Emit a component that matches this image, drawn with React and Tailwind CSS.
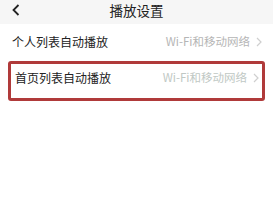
import React from "react";

const Chevron = () => (
  <svg width="6" height="10" viewBox="0 0 6 10" className="ml-[6px]">
    <path d="M1 1 L5 5 L1 9" fill="none" stroke="#cfcfcf" strokeWidth="1.2" />
  </svg>
);

export default function App() {
  return (
    <div
      className="w-[273px] h-[217px] bg-white overflow-hidden"
      style={{ fontFamily: '"Noto Sans CJK SC", "Noto Sans", sans-serif' }}
    >
      <div className="h-[24px] bg-[#f6f6f6] flex items-start pt-[4px] relative">
        <svg width="8" height="12" viewBox="0 0 8 12" className="ml-[12px]">
          <path d="M6.5 1 L1.5 6 L6.5 11" fill="none" stroke="#222" strokeWidth="1.8" />
        </svg>
        <div className="absolute inset-x-0 top-[1px] flex justify-center text-[13.5px] leading-[19px] text-[#222]">
          播放设置
        </div>
      </div>
      <div className="h-[36px] flex items-center pl-[12px] pr-[11px]">
        <span className="text-[12px] text-[#222]">个人列表自动播放</span>
        <span className="ml-auto text-[11.5px] text-[#b5b5b5]">Wi-Fi和移动网络</span>
        <Chevron />
      </div>
      <div className="mx-[8px] mt-[1px] h-[40px] border-[3px] border-[#b03a3a] rounded-[3px] flex items-center pb-[6px] pl-[4px] pr-[3px]">
        <span className="text-[12px] text-[#222]">首页列表自动播放</span>
        <span className="ml-auto text-[11.5px] text-[#c0c8c4]">Wi-Fi和移动网络</span>
        <Chevron />
      </div>
    </div>
  );
}
